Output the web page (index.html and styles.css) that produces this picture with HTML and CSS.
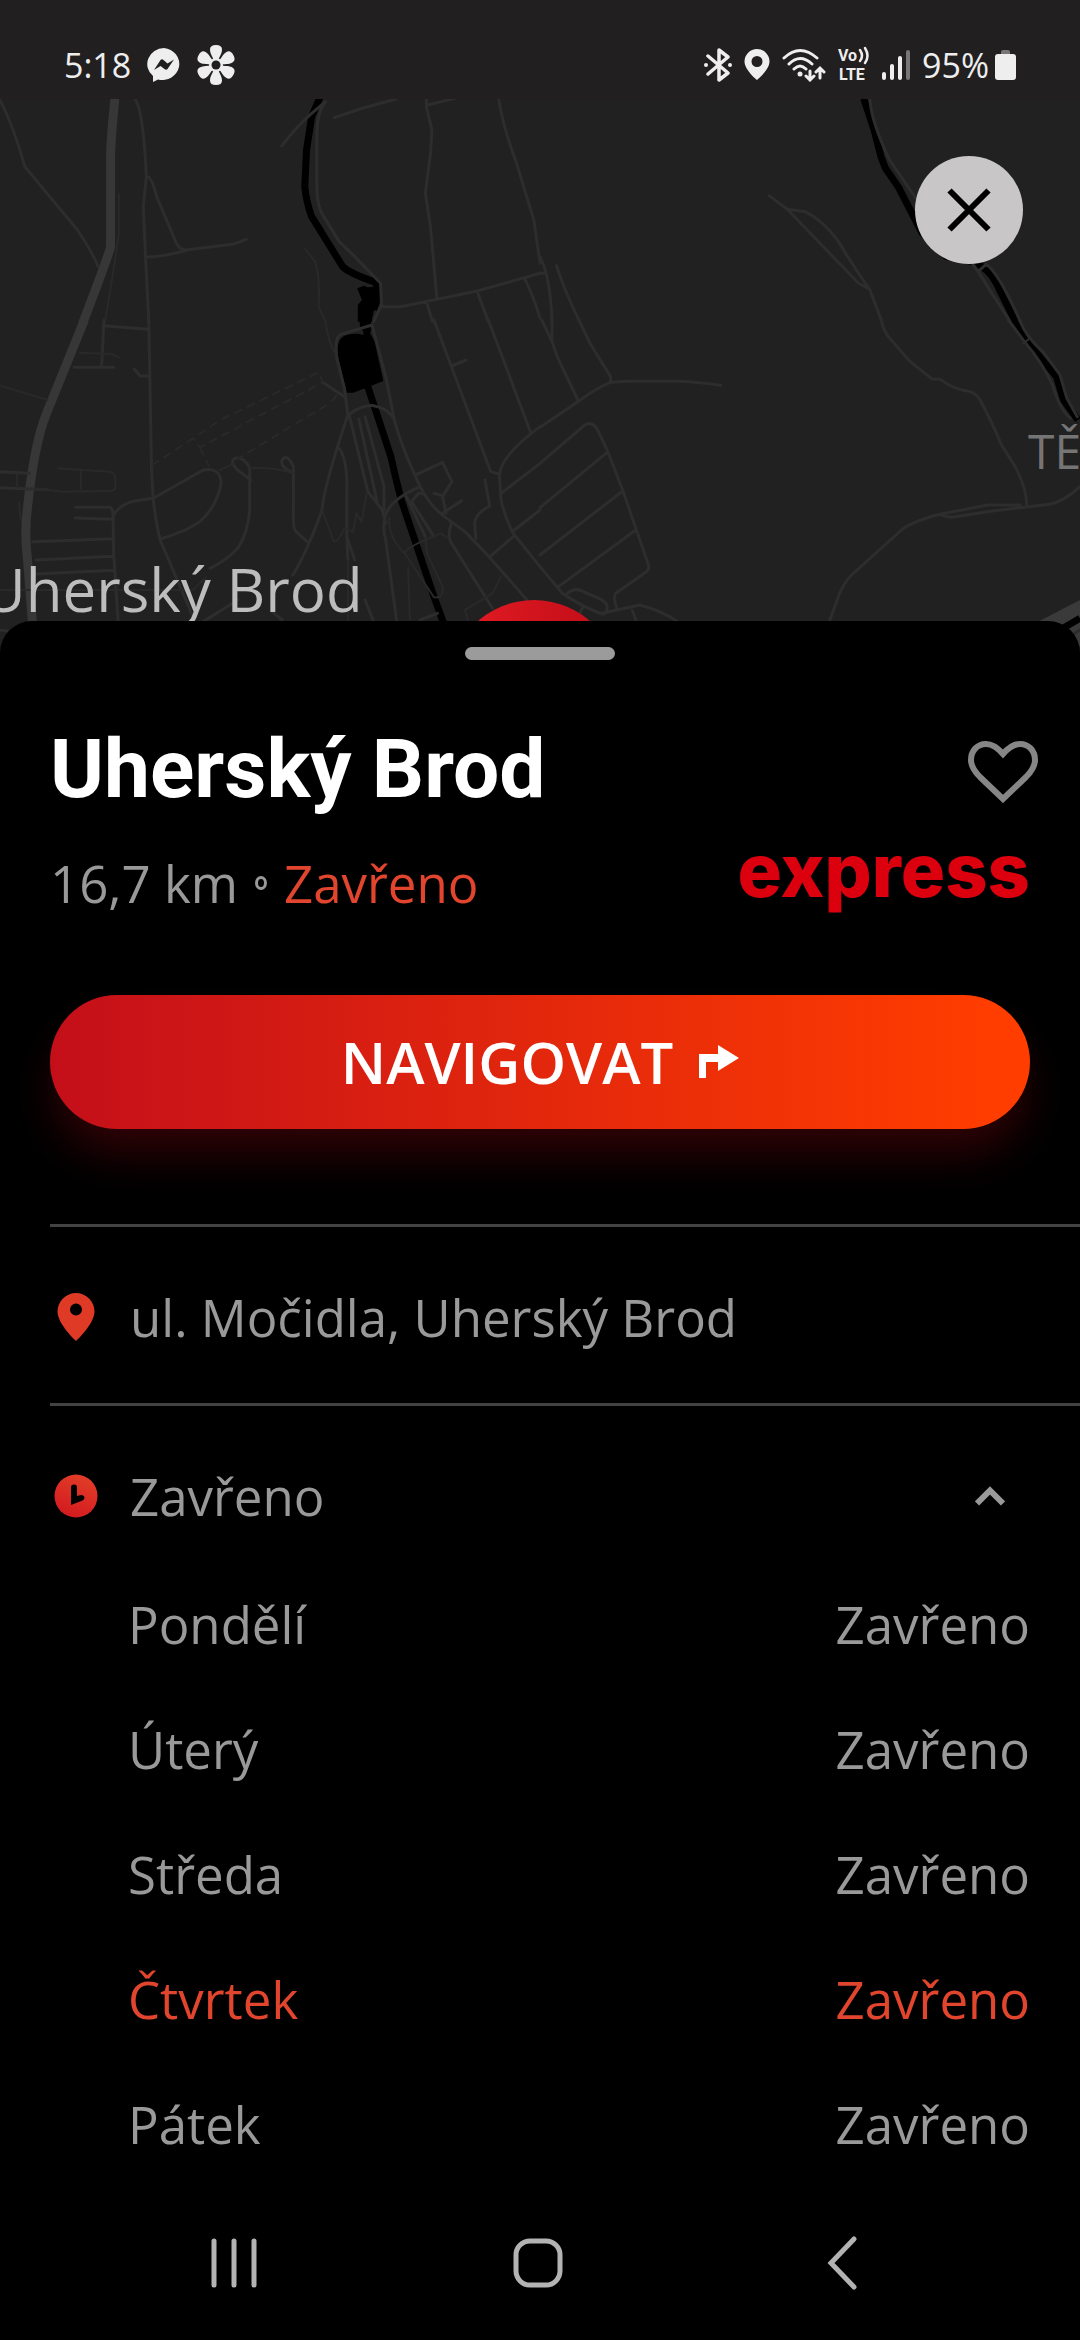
FILE: index.html
```html
<!DOCTYPE html>
<html lang="cs">
<head>
<meta charset="utf-8">
<meta name="viewport" content="width=device-width, initial-scale=1">
<title>Uherský Brod</title>
<link rel="stylesheet" href="styles.css">
</head>
<body>
<header class="status">
  <div class="status-left">
    <span class="status-text">5:18</span>
    <svg width="34" height="34" viewBox="0 0 34 34"><path fill="#eee" d="M17 0a17 16 0 1 1-6 31.400L6 34V28A17 16 0 0 1 17 0z"/><path fill="#221f20" d="M7 22l6.500-10q1.500-1.500 3 0l4 3.500 6.500-4-6.500 9.500q-1.500 1.500-3 0l-4-3z"/></svg>
    <svg width="38" height="40" viewBox="-19 -20 38 40"><g fill="#eee"><path id="petal" d="M-2-4C-3-8-6-11-6-15.500q0-4.500 6-4.500t6 4.500C6-11 3-8 2-4z"/><use href="#petal" transform="rotate(60)"/><use href="#petal" transform="rotate(120)"/><use href="#petal" transform="rotate(180)"/><use href="#petal" transform="rotate(240)"/><use href="#petal" transform="rotate(300)"/><circle r="7"/></g><circle r="4.500" fill="#221f20"/></svg>
  </div>
  <div class="status-right">
    <svg width="28" height="34" viewBox="0 0 28 34"><path fill="none" stroke="#eee" stroke-width="3.500" stroke-linejoin="round" stroke-linecap="round" d="M4 8l20 17-9 7V2l9 7L4 26"/><circle cx="2" cy="17" r="2" fill="#eee"/><circle cx="26" cy="17" r="2" fill="#eee"/></svg>
    <svg width="26" height="32" viewBox="0 0 26 32"><path fill="#eee" fill-rule="evenodd" d="M13 0a12.500 12.500 0 0 1 12.500 12.500C25.500 21 13 31 13 31S.5 21 .5 12.500A12.500 12.500 0 0 1 13 0zm0 7a5.500 5.500 0 1 0 0 11 5.500 5.500 0 0 0 0-11z"/></svg>
    <svg width="44" height="34" viewBox="0 0 44 34"><g fill="none" stroke="#eee" stroke-width="3" stroke-linecap="round"><path d="M2 10Q18-5 35 10M7 16q11-11 23 0M12 21q6-6 12 0M28 23v9M24 28l4 4 4-4M38 30v-9M34 24l4-4 4 4"/></g><circle cx="18" cy="26" r="2.500" fill="#eee"/></svg>
    <svg width="32" height="40" viewBox="0 0 32 40"><text class="volte" x="0" y="16">Vo</text><text class="volte" x="1" y="35">LTE</text><path fill="none" stroke="#eee" stroke-width="2.500" stroke-linecap="round" d="M22 5q4 6 0 11M27 3q5 8 0 15"/></svg>
    <svg width="28" height="34" viewBox="0 0 28 34"><g stroke="#eee" stroke-width="4" stroke-linecap="round"><path d="M2 26v4M10 18v12M18 10v20"/><path stroke="#777" d="M26 4v26"/></g></svg>
    <span class="charge"><span class="status-text">95%</span>
    <svg width="21" height="30" viewBox="0 0 21 30"><path fill="#777" d="M6 5V2q0-2 2-2h5q2 0 2 2v3z"/><rect y="4" width="21" height="26" rx="3" fill="#eee"/></svg></span>
  </div>
</header>

<section class="map" aria-label="Mapa">
  <svg class="map-canvas" viewBox="0 99 1080 561" preserveAspectRatio="xMidYMin slice">
    <defs>
      <linearGradient id="marker-fill" x1="0" x2="1"><stop offset="0" stop-color="#e61c24"/><stop offset="1" stop-color="#bd0c17"/></linearGradient>
    </defs>
    <!-- north-west tile -->
    <g transform="scale(.3444 .3333)">
      <path class="major" d="M334 290C326 380 321 420 321 480V740Q318 760 240 970"/>
      <path class="rail" d="M930 290L905 350 890 450 885 560Q890 610 905 650L995 800Q1015 820 1085 845 1100 850 1095 900L1085 930"/>
      <path class="station" d="M1037 865l20-8 10 5 22-2 5 30-5 25-10 50h-40V915l12-15z"/>
      <path class="road" d="M0 300Q40 380 72 500L225 690Q270 760 285 800M392 297Q416 330 425 530L416 620 423 780 432 965M428 530Q440 530 455 590L510 725Q520 750 540 750L680 732 715 718M423 772Q470 770 540 752M818 438Q860 380 905 340L945 305Q920 340 920 400V560Q920 620 940 650L985 725 1030 770 1105 850 1108 920M970 353Q1060 320 1150 297M1238 297V320L1254 390 1250 460 1235 580 1250 680 1268 890M1242 315L1320 295M1448 297Q1460 380 1500 490L1550 660 1568 790M1105 920H1165L1385 873 1568 820M1238 905L1256 965M1385 873L1418 965M1523 835Q1550 890 1568 955M1105 920L1085 965"/>
      <path class="path" d="M345 580V700Q335 780 305 965M885 745L915 785Q930 830 925 920L945 965"/>
    </g>
    <!-- north-east tile -->
    <g transform="translate(540 0) scale(.3444 .3333)">
      <path class="rail" d="M940 295L970 390 990 470 1003 505 1040 560 1110 700 1180 770 1255 785Q1305 805 1325 850L1380 965"/>
      <path class="road" d="M958 295Q960 360 1015 480L1095 600M665 587L718 628 925 850 957 868Q910 800 865 722 820 660 770 635L718 628M957 868L993 965M48 797Q70 870 115 965M0 770Q30 830 35 965M0 820h10M1255 790L1272 815 1365 965M1272 815L1295 793Q1330 815 1395 965"/>
    </g>
    <!-- south-west tile -->
    <g transform="translate(0 320) scale(.3444 .3333)">
      <path class="major" d="M245 0L135 280Q100 370 80 560 70 640 80 720L95 920"/>
      <path class="rail" d="M1055 0V20L1075 35M1068 200L1135 410Q1150 480 1165 540L1260 830 1290 915"/>
      <path class="station" d="M1037 0H1078L1075 40 1088 65 1113 183 1060 205 1025 218H1007L985 125Q970 65 1000 47 1030 37 1055 45V15z"/>
      <path class="road" d="M300 17L430 28M302 0L295 140M215 142H330M432 0L440 450 445 540Q455 620 465 660L560 890M390 147L407 168H435M0 455L85 460M0 503L140 509M220 562H315Q328 562 328 580L330 700 343 905M218 594L330 598M95 665L330 656M105 720L330 709M105 762L330 751M395 542L445 535 590 450Q640 440 642 490 630 560 580 605 540 635 465 657M330 585Q350 550 395 542M728 480L690 450Q665 425 682 415 710 410 725 445V570Q720 640 690 685 660 720 610 745M852 460Q810 440 820 418 835 400 852 440V570Q850 630 860 635L895 668M1010 285Q940 500 935 570 890 700 850 765M985 385Q1010 420 1007 520V650L1030 720M1007 650L1010 720M1010 285Q1050 255 1085 257 1130 265 1145 300 1165 380 1220 500 1250 560 1290 590L1350 635 1420 710 1530 840M1010 285L1000 205 978 115Q970 50 990 43L1080 15 1120 170 1145 300M1000 230L937 187M1015 290L1068 515 1110 570 1120 610M1042 297L1095 545M1060 290L1115 500V570M1220 500Q1130 540 1118 590 1110 630 1120 660L1152 905M1210 463L1285 427 1312 485 1285 530 1295 580M1260 520L1285 527M1285 580L1340 542M1195 545L1215 520 1230 522M1195 545L1260 650M1180 530L1235 650M1260 0L1425 455 1450 463M1418 0L1540 335M1312 138L1353 120M1568 320Q1450 410 1450 470L1455 540Q1465 590 1490 640L1568 740M1455 520L1568 430M1490 633L1568 570M1423 710L1490 650M1408 480L1422 558Q1380 580 1378 610L1382 655M1310 612Q1300 640 1308 665L1430 865M1060 840L1085 905M790 875L820 900M590 905L690 840M1220 900L1270 880M0 930L35 935"/>
      <path class="path" d="M0 197Q60 215 140 240M230 98L325 102 347 113M165 445L320 455Q335 458 335 480V500Q335 513 315 513L180 515 100 505M235 447V510M50 460V505M635 452L680 430M725 445Q790 440 852 460M935 570L970 665Q980 668 1000 625L1025 635 1035 580 1050 605 1065 520M1130 590Q1125 650 1175 700L1260 832Q1290 835 1285 800L1240 700 1235 650M1175 700Q1180 680 1280 640L1300 655M1185 740L1190 900M1455 770L1430 820 1350 870 1360 905M945 0Q950 60 975 105M55 545L60 600M1010 720V905M0 810H560L600 770"/>
      <path class="trail" d="M440 437L560 355 640 300 925 157 937 187 580 382 560 355M580 382L608 440M978 225Q965 250 900 285L685 420"/>
    </g>
    <!-- south-east tile -->
    <g transform="translate(540 320) scale(.3444 .3333)">
      <path class="rail" d="M1375 0L1410 60 1500 170 1520 240 1562 300"/>
      <path class="crossing" d="M1400 72L1425 53"/>
      <path class="road" d="M990 0Q1000 40 1020 60L1075 125 1140 178H1163Q1195 205 1240 213 1260 215 1275 235 1310 300 1340 375L1380 440Q1415 510 1413 560M840 905L870 820Q885 785 905 765L1050 630Q1080 605 1160 583 1170 590 1195 592L1320 572 1480 553Q1520 545 1568 500M1160 583L1300 555H1395M1360 0L1410 70Q1460 130 1490 200 1510 270 1540 295M1393 0Q1410 50 1460 95 1500 150 1510 165L1530 235 1560 290M5 0L35 65 50 110 110 240M35 0V60M113 0L145 70 205 170V187M0 322L110 245Q170 200 205 187L260 184H400Q450 185 525 196M0 430L130 315Q150 303 165 325L195 390 240 510 315 735Q320 750 300 762L220 820Q210 830 225 870M0 563L195 397M0 705L240 513M50 803L278 630M0 740L65 820Q120 860 180 882 195 885 195 860 195 850 180 840L120 812Q95 802 75 825M180 880L290 855Q350 870 400 905M265 862L280 905M115 880L125 860"/>
      <path fill="#3a3a3a" d="M1450 903L1568 840V980H1500z"/>
      <path class="rail" d="M1510 930L1568 895"/>
      <path class="road" d="M1530 955L1568 930"/>
    </g>
    <circle cx="534" cy="685" r="85" fill="url(#marker-fill)"/>
    <text class="place place-town" x="-18" y="612">Uherský Brod</text>
    <text class="place place-district" x="1028" y="469">TĚŠOV</text>
  </svg>
  <button class="close" type="button" aria-label="Zavřít">
    <svg width="44" height="44" viewBox="0 0 44 44"><path d="M2.500 2.500l39 39M41.500 2.500l-39 39" stroke="#000" stroke-width="6"/></svg>
  </button>
</section>

<main class="sheet">
  <div class="handle"></div>
  <div class="title-row">
    <h1>Uherský Brod</h1>
    <button class="favorite" type="button" aria-label="Přidat k oblíbeným">
      <svg width="70" height="62" viewBox="0 0 70 62"><path fill="none" stroke="#868686" stroke-width="6" d="M35 13C29 6 24 3 18 3 9 3 3 10 3 19c0 7 4 12 9 17l23 22 23-22c5-5 9-10 9-17C67 10 61 3 52 3c-6 0-11 3-17 10z"/></svg>
    </button>
  </div>
  <div class="meta-row">
    <p class="meta"><span>16,7 km</span><span class="dot"></span><span class="accent">Zavřeno</span></p>
    <span class="brand">express</span>
  </div>
  <button class="navigate" type="button">NAVIGOVAT
    <svg width="40" height="34" viewBox="0 0 40 34"><path fill="#fff" d="M0 9h19V0l21 13-21 13V17H7v16H0z"/></svg>
  </button>
  <div class="row">
    <span class="row-icon"><svg width="38" height="48" viewBox="0 0 38 48"><path fill="#df3a26" fill-rule="evenodd" d="M19 0a18.500 18.500 0 0 1 18.500 18.500C37.500 31 19 48 19 48S.5 31 .5 18.500A18.500 18.500 0 0 1 19 0zm0 10.500a6 6 0 1 0 0 12 6 6 0 0 0 0-12z"/></svg></span>
    <span class="row-label">ul. Močidla, Uherský Brod</span>
  </div>
  <button class="row toggle" type="button" aria-expanded="true">
    <span class="row-icon"><svg width="44" height="44" viewBox="0 0 44 44"><defs><linearGradient id="red" x1=".3" y1="1" x2=".7" y2="0"><stop offset="0" stop-color="#d3191f"/><stop offset="1" stop-color="#e23e28"/></linearGradient></defs><circle cx="22" cy="22" r="21.500" fill="url(#red)"/><path d="M17 13.500a3 3 0 0 1 6 0V22l4-1q3 0 3.500 2.500 0 2-2 3L17 31z"/></svg></span>
    <span class="row-label">Zavřeno</span>
    <svg width="30" height="20" viewBox="0 0 30 20"><path fill="none" stroke="#999" stroke-width="6" d="M2 17.500L15 4.500 28 17.500"/></svg>
  </button>
  <table class="hours">
    <tbody>
      <tr><th scope="row">Pondělí</th><td>Zavřeno</td></tr>
      <tr><th scope="row">Úterý</th><td>Zavřeno</td></tr>
      <tr><th scope="row">Středa</th><td>Zavřeno</td></tr>
      <tr class="accent"><th scope="row">Čtvrtek</th><td>Zavřeno</td></tr>
      <tr><th scope="row">Pátek</th><td>Zavřeno</td></tr>
    </tbody>
  </table>
</main>

<nav class="system-nav" aria-label="Systém">
  <button type="button" aria-label="Poslední aplikace"><svg width="46" height="50" viewBox="0 0 46 50"><path d="M3 3v44M23 3v44M43 3v44"/></svg></button>
  <button type="button" aria-label="Domů"><svg width="50" height="50" viewBox="0 0 50 50"><rect x="3" y="3" width="44" height="44" rx="14"/></svg></button>
  <button type="button" aria-label="Zpět"><svg width="30" height="54" viewBox="0 0 30 54"><path d="M27 3L4 27l23 24"/></svg></button>
</nav>
</body>
</html>
```
FILE: styles.css
```css
* {
  box-sizing: border-box;
}

body {
  margin: 0;
  background: #000;
  color: #999;
  font-family: "Open Sans", "Noto Sans", sans-serif;
  font-size: 51px;
  line-height: 68px;
}

button {
  padding: 0;
  border: 0;
  background: none;
  color: inherit;
  font: inherit;
}

svg {
  display: block;
  flex: none;
}

/* Status bar */

.status {
  display: flex;
  justify-content: space-between;
  padding: 40px 64px 9px;
  background: #221f20;
  color: #eee;
}

.status-left,
.status-right,
.charge {
  display: flex;
  align-items: center;
  gap: 12px;
}

.status-left {
  gap: 16px;
}

.charge {
  gap: 6px;
}

.status-text {
  font-size: 34px;
  line-height: 50px;
}

.volte {
  fill: #eee;
  font-family: Roboto, sans-serif;
  font-size: 16px;
  font-weight: 700;
}

/* Map */

.map {
  position: relative;
  height: 561px;
  overflow: hidden;
  background: #212121;
}

.map-canvas {
  width: 100%;
  height: 100%;
}

.major,
.rail,
.road,
.path,
.trail,
.crossing {
  fill: none;
  stroke-linejoin: round;
  vector-effect: non-scaling-stroke;
}

.major {
  stroke: #373737;
  stroke-width: 9px;
}

.rail {
  stroke: #000;
  stroke-width: 7px;
}

.road {
  stroke: #2d2d2d;
  stroke-width: 3px;
  stroke-linecap: round;
}

.path,
.trail {
  stroke: #292929;
  stroke-width: 2px;
}

.trail {
  stroke-dasharray: 9px 5px;
}

.crossing {
  stroke: #2d2d2d;
  stroke-width: 2px;
}

.station {
  fill: #000;
}

.place-town {
  fill: #bdbdbd;
  font-size: 60px;
}

.place-district {
  fill: #757575;
  font-size: 48px;
}

.close {
  position: absolute;
  top: 57px;
  right: 57px;
  display: grid;
  place-items: center;
  width: 108px;
  height: 108px;
  border-radius: 50%;
  background: #c8c6c7;
}

/* Bottom sheet */

.sheet {
  position: relative;
  margin-top: -39px;
  padding: 26px 50px 0;
  border-radius: 32px 32px 0 0;
  background: #000;
}

.handle {
  width: 150px;
  height: 13px;
  margin: 0 auto;
  border-radius: 7px;
  background: #9b9b9b;
}

.title-row,
.meta-row {
  display: flex;
  justify-content: space-between;
}

.title-row {
  align-items: center;
  margin: 61px -8px 0 0;
}

.favorite {
  padding-top: 6px;
}

h1 {
  margin: 0;
  color: #fff;
  font-family: Roboto, sans-serif;
  font-size: 82px;
  font-weight: 700;
  line-height: 96px;
}

.meta-row {
  align-items: flex-start;
  margin-top: 32px;
}

.meta {
  display: flex;
  align-items: center;
  gap: 17px;
  margin: 0;
}

.dot {
  width: 12px;
  height: 14px;
  border: 3px solid #999;
  border-radius: 50%;
}

.accent {
  color: #e2452e;
}

.brand {
  color: #dc000f;
  font-family: Inter, sans-serif;
  font-size: 74px;
  font-weight: 800;
  line-height: 42px;
}

.navigate {
  display: flex;
  align-items: center;
  justify-content: center;
  gap: 26px;
  width: 100%;
  height: 134px;
  margin: 78px 0 95px;
  border-radius: 67px;
  background: linear-gradient(90deg, #c40f1a, #ff3d00 96%);
  box-shadow: 0 28px 44px -4px #300306;
  color: #fff;
  font-size: 58px;
  font-weight: 600;
}

.row {
  display: flex;
  align-items: center;
  gap: 28px;
  width: calc(100% + 50px);
  margin-right: -50px;
  padding: 56px 75px 52px 0;
  border-top: 3px solid #434343;
  text-align: left;
}

.row-icon {
  display: grid;
  place-items: center;
  width: 52px;
}

.row-label {
  flex: 1;
}

.toggle {
  padding-bottom: 31px;
}

.hours {
  width: 100%;
  border-collapse: collapse;
}

.hours th,
.hours td {
  height: 125px;
  padding: 0;
  font-weight: 400;
  text-align: left;
}

.hours th {
  padding-left: 78px;
}

.hours td {
  text-align: right;
}

/* System navigation */

.system-nav {
  display: grid;
  grid-template-columns: repeat(3, 1fr);
  padding: 0 86px 0 82px;
}

.system-nav button {
  display: grid;
  place-items: center;
  height: 154px;
}

.system-nav svg {
  fill: none;
  stroke: #b3b3b3;
  stroke-width: 5px;
  stroke-linecap: round;
}
```
